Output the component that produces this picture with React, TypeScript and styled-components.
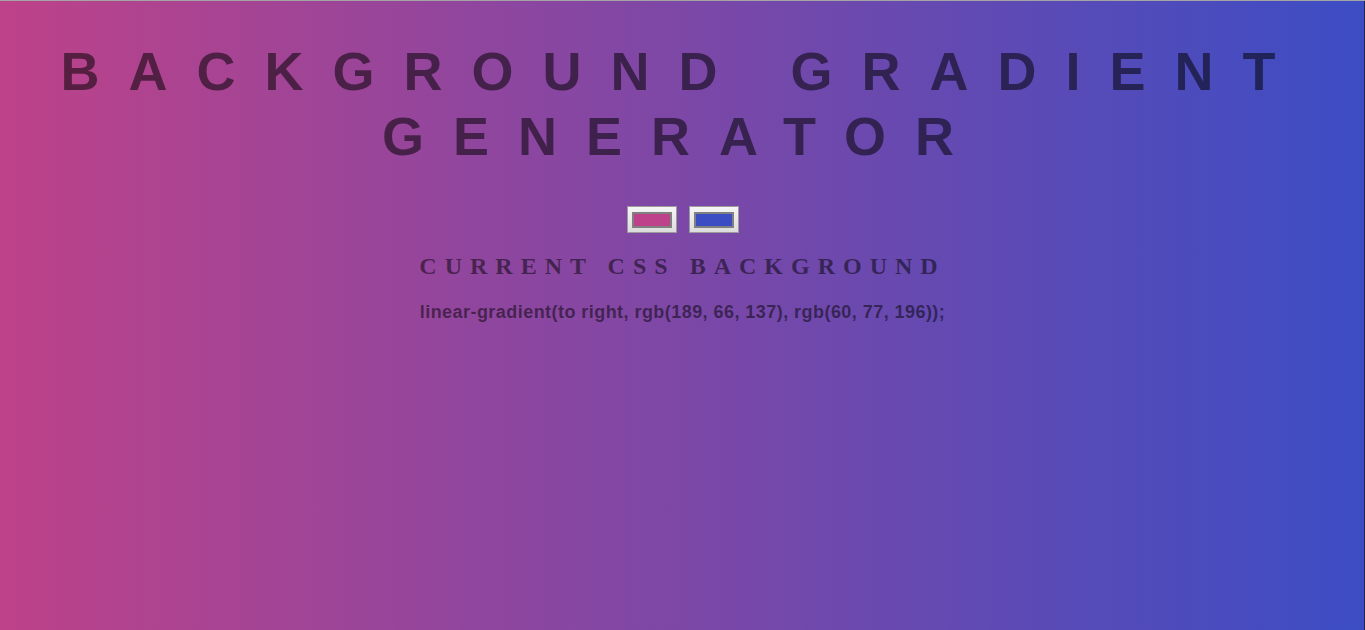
import React, { useState } from "react";
import styled, { createGlobalStyle } from "styled-components";

const GlobalStyle = createGlobalStyle`
  html, body {
    margin: 0;
    padding: 0;
  }
  body {
    font-family: "Liberation Sans", Arial, sans-serif;
  }
`;

const Page = styled.div<{ $from: string; $to: string }>`
  box-sizing: border-box;
  min-height: 630px;
  background: linear-gradient(to right, ${(p) => p.$from}, ${(p) => p.$to});
  box-shadow: inset 0 1px 0 #a4a4a4, inset -1px 0 0 #1e2450;
  display: flex;
  flex-direction: column;
  align-items: center;
  text-align: center;
  overflow: hidden;
`;

const Title = styled.h1`
  margin: 39px 0 0;
  font-family: "Liberation Sans", Arial, sans-serif;
  font-weight: 700;
  font-size: 54px;
  line-height: 65px;
  letter-spacing: 29px;
  color: rgba(0, 0, 0, 0.53);
`;

const Pickers = styled.div`
  display: flex;
  gap: 12px;
  margin-top: 37px;
`;

const ColorInput = styled.input.attrs({ type: "color" })`
  -webkit-appearance: none;
  appearance: none;
  box-sizing: border-box;
  width: 50px;
  height: 27px;
  margin: 0;
  padding: 0;
  border: 1px solid #9c9c9c;
  background: linear-gradient(to bottom, #f5f5f5, #dcdcdc);
  cursor: pointer;

  &::-webkit-color-swatch-wrapper {
    padding: 4.5px 4px;
  }
  &::-webkit-color-swatch {
    border: 2px solid #808080;
    border-radius: 0;
  }
`;

const Subtitle = styled.h2`
  margin: 19px 0 0;
  font-family: "Liberation Serif", "Times New Roman", serif;
  font-weight: 700;
  font-size: 24px;
  line-height: 28px;
  letter-spacing: 8px;
  color: rgba(0, 0, 0, 0.5);
`;

const CssText = styled.h3`
  margin: 22px 0 0;
  font-family: "Liberation Sans", Arial, sans-serif;
  font-weight: 700;
  font-size: 18px;
  line-height: 20px;
  letter-spacing: 0.45px;
  color: rgba(0, 0, 0, 0.5);
`;

function hexToRgb(hex: string): string {
  const h = hex.replace("#", "");
  const r = parseInt(h.slice(0, 2), 16);
  const g = parseInt(h.slice(2, 4), 16);
  const b = parseInt(h.slice(4, 6), 16);
  return `rgb(${r}, ${g}, ${b})`;
}

export default function App() {
  const [c1, setC1] = useState("#bd4289");
  const [c2, setC2] = useState("#3c4dc4");
  const from = hexToRgb(c1);
  const to = hexToRgb(c2);
  return (
    <>
      <GlobalStyle />
      <Page $from={from} $to={to}>
        <Title>
          BACKGROUND GRADIENT
          <br />
          GENERATOR
        </Title>
        <Pickers>
          <ColorInput value={c1} onChange={(e) => setC1(e.target.value)} />
          <ColorInput value={c2} onChange={(e) => setC2(e.target.value)} />
        </Pickers>
        <Subtitle>CURRENT CSS BACKGROUND</Subtitle>
        <CssText>
          linear-gradient(to right, {from}, {to});
        </CssText>
      </Page>
    </>
  );
}
